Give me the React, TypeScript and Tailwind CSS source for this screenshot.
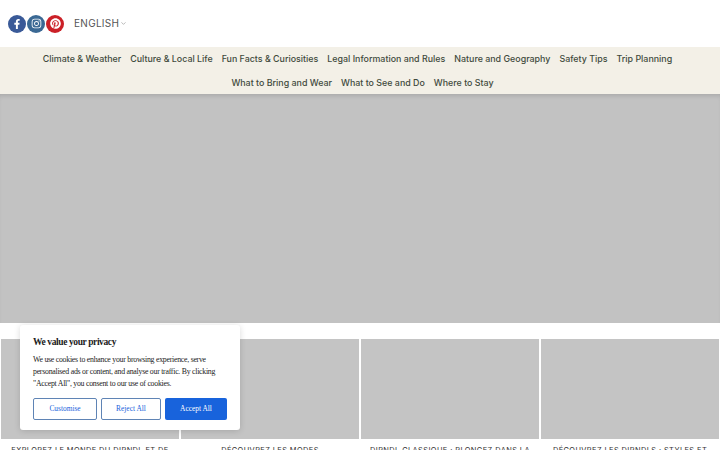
import React from 'react';
import { FaFacebookF, FaInstagram, FaPinterest } from 'react-icons/fa';
import { LuChevronDown } from 'react-icons/lu';

const NAV_ROWS = [
  { items: ['Climate & Weather', 'Culture & Local Life', 'Fun Facts & Curiosities', 'Legal Information and Rules', 'Nature and Geography', 'Safety Tips', 'Trip Planning'], className: 'pr-[5px]' },
  { items: ['What to Bring and Wear', 'What to See and Do', 'Where to Stay'], className: 'pl-[5px]' },
];

const CARDS = [
  'EXPLOREZ LE MONDE DU DIRNDL ET DE',
  'DÉCOUVREZ LES MODES',
  'DIRNDL CLASSIQUE : PLONGEZ DANS LA',
  'DÉCOUVREZ LES DIRNDLS : STYLES ET',
];

export default function App() {
  return (
    <div className="relative h-[450px] w-[720px] overflow-hidden bg-white font-['Inter',sans-serif]">
      <header className="flex h-[47px] items-center pl-2">
        <div className="flex gap-px">
          <a className="flex h-[18px] w-[18px] items-center justify-center rounded-full bg-[#3a5a98] text-[10px] text-white"><FaFacebookF /></a>
          <a className="flex h-[18px] w-[18px] items-center justify-center rounded-full bg-[#3b6994] text-[11px] text-white"><FaInstagram /></a>
          <a className="flex h-[18px] w-[18px] items-center justify-center rounded-full bg-[#cb2027] text-[11px] text-white"><FaPinterest /></a>
        </div>
        <span className="ml-[10px] text-[10px] tracking-[0.3px] text-[#555]">ENGLISH</span>
        <LuChevronDown className="ml-px h-[7px] w-[7px] text-[#888]" />
      </header>

      <nav className="h-[47px] bg-[#f3f0e7] text-[8.9px] font-medium text-[#3f4a3c]">
        {NAV_ROWS.map((row, i) => (
          <ul key={i} className={`flex h-[23.5px] items-center justify-center gap-[9px] ${row.className}`}>
            {row.items.map((item) => (
              <li key={item} className="whitespace-nowrap">{item}</li>
            ))}
          </ul>
        ))}
      </nav>

      <section className="h-[229px] bg-[#c2c2c2] shadow-[inset_0_4px_4px_-2px_rgba(0,0,0,0.12)]" />

      <section className="mt-4 grid grid-cols-4 gap-[2px] px-px">
        {CARDS.map((card) => (
          <div key={card}>
            <div className="h-[100px] bg-[#c4c4c4]" />
            <p className="mt-[6px] px-2 text-center text-[7.4px] tracking-[0.42px] whitespace-nowrap text-[#333]">{card}</p>
          </div>
        ))}
      </section>

      {/* cookie banner */}
      <div className="absolute top-[325px] left-5 h-[105px] w-[220px] rounded-[3px] bg-white px-[13px] pt-[11px] font-['Liberation_Serif',serif] shadow-[0_1px_6px_rgba(0,0,0,0.15)]">
        <h2 className="text-[9.5px] leading-[12px] font-bold tracking-[-0.4px] text-[#212121]">We value your privacy</h2>
        <p className="mt-[6px] text-[7.8px] leading-[12px] tracking-[-0.25px] text-[#212121]">
          We use cookies to enhance your browsing experience, serve personalised ads or content, and analyse our traffic. By clicking "Accept All", you consent to our use of cookies.
        </p>
        <div className="mt-[8px] flex gap-1">
          <button className="h-[22px] w-[64px] rounded-[2px] border-[1.5px] border-[#5f84b5] text-[7.4px] text-[#1863dc]">Customise</button>
          <button className="h-[22px] w-[60px] rounded-[2px] border-[1.5px] border-[#5f84b5] text-[7.4px] text-[#1863dc]">Reject All</button>
          <button className="h-[22px] w-[62px] rounded-[2px] bg-[#1863dc] text-[7.4px] text-white">Accept All</button>
        </div>
      </div>
    </div>
  );
}
